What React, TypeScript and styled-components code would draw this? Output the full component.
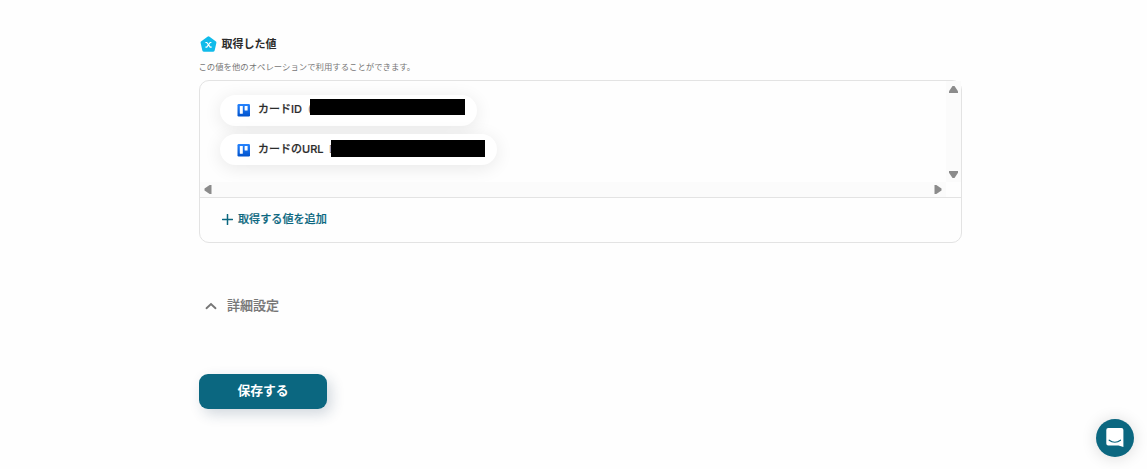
import React from 'react';
import styled, { createGlobalStyle } from 'styled-components';

interface Value {
  label: string;
  hint: string;
  labelWidth: number;
  maskWidth: number;
  maskHeight: number;
  maskOffset: number;
}

const VALUES: Value[] = [
  { label: 'カードID', hint: '(', labelWidth: 52, maskWidth: 155, maskHeight: 16, maskOffset: -7 },
  { label: 'カードのURL', hint: '[', labelWidth: 73, maskWidth: 154, maskHeight: 17, maskOffset: -4 },
];

const TrelloIcon = () => (
  <svg width="13" height="13" viewBox="0 0 13 13">
    <defs>
      <linearGradient id="trello" x1="0" y1="0" x2="0" y2="1">
        <stop offset="0" stopColor="#2684ff" />
        <stop offset="1" stopColor="#0052cc" />
      </linearGradient>
    </defs>
    <rect x="0.5" width="12.5" height="12.5" rx="1.2" fill="url(#trello)" />
    <rect x="2.8" y="2" width="3" height="7.8" rx="0.5" fill="#fff" />
    <rect x="7.6" y="2" width="3" height="4.6" rx="0.5" fill="#fff" />
  </svg>
);

const PentagonIcon = () => (
  <svg width="17" height="17" viewBox="0 0 17 17">
    <path
      d="M8.5 2.2 14.6 6.6 12.9 14H4.1L2.4 6.6Z"
      fill="#10bbea"
      stroke="#10bbea"
      strokeWidth="3.6"
      strokeLinejoin="round"
    />
    <path d="M5.4 6.5h1.4l3.4 4.6h1.5M11.4 6.5h-1.2L6.8 11.1H5.4" fill="none" stroke="#fff" strokeWidth="1.2" />
  </svg>
);

const App = () => {
  return (
    <>
      <GlobalStyle />
      <Container>
        <Heading>
          <PentagonIcon />
          <Title>取得した値</Title>
        </Heading>
        <Description>この値を他のオペレーションで利用することができます。</Description>
        <Card>
          <ScrollArea>
            <ChipList>
              {VALUES.map(({ label, hint, labelWidth, maskWidth, maskHeight, maskOffset }) => (
                <Chip key={label}>
                  <TrelloIcon />
                  <ChipLabel $width={labelWidth}>
                    {label}
                    <Hint>{hint}</Hint>
                  </ChipLabel>
                  <Mask $width={maskWidth} $height={maskHeight} $offset={maskOffset} />
                </Chip>
              ))}
            </ChipList>
            <VerticalBar>
              <svg width="15" height="15" viewBox="0 0 15 15">
                <path d="M6.5 5h2L12 10.2V12H3v-1.8Z" fill="#8b8b8b" />
              </svg>
              <svg width="15" height="15" viewBox="0 0 15 15">
                <path d="M3 4h9v1.8L8.5 11h-2L3 5.8Z" fill="#8b8b8b" />
              </svg>
            </VerticalBar>
            <HorizontalBar>
              <svg width="15" height="15" viewBox="0 0 15 15">
                <path d="M4.5 6.5v2L9.7 12h1.8V3H9.7Z" fill="#8b8b8b" />
              </svg>
              <svg width="15" height="15" viewBox="0 0 15 15">
                <path d="M3.5 3h1.8l5.2 3.5v2L5.3 12H3.5Z" fill="#8b8b8b" />
              </svg>
            </HorizontalBar>
          </ScrollArea>
          <AddButton>
            <svg width="11" height="11" viewBox="0 0 11 11">
              <path d="M5.5 0.5v10M0.5 5.5h10" stroke="#0b6780" strokeWidth="1.5" strokeLinecap="round" />
            </svg>
            <span>取得する値を追加</span>
          </AddButton>
        </Card>
        <DetailToggle>
          <svg width="12" height="8" viewBox="0 0 12 8">
            <path d="M1.5 6.2 6 2l4.5 4.2" fill="none" stroke="#767676" strokeWidth="1.9" strokeLinecap="round" />
          </svg>
          <span>詳細設定</span>
        </DetailToggle>
        <SaveButton>保存する</SaveButton>
      </Container>
      <ChatButton>
        <svg width="18" height="19" viewBox="0 0 18 19">
          <path
            d="M2.2 0h13.3a1.9 1.9 0 0 1 1.9 1.9v17L12.5 17.5H2.2A1.9 1.9 0 0 1 .3 15.6V1.9A1.9 1.9 0 0 1 2.2 0Z"
            fill="#fff"
          />
          <path d="M3.2 12.2c3.3 2.5 8 2.5 11.3 0" fill="none" stroke="#0b6780" strokeWidth="1.2" strokeLinecap="round" />
        </svg>
      </ChatButton>
    </>
  );
};
export default App;

const GlobalStyle = createGlobalStyle`
  * {
    box-sizing: border-box;
  }
  body {
    margin: 0;
    background-color: #fefefe;
    color: #2b2b2b;
    font-family: 'Noto Sans CJK JP', sans-serif;
  }
  svg {
    display: block;
    flex-shrink: 0;
  }
  button {
    padding: 0;
    border: none;
    background: none;
    font-family: inherit;
  }
`;
const Container = styled.main`
  width: 763px;
  height: 469px;
  margin-left: 199px;
  padding-top: 34px;
`;
const Heading = styled.div`
  display: flex;
  align-items: center;
  height: 20px;
  padding-left: 1px;
  gap: 4.5px;
`;
const Title = styled.h2`
  margin: 0;
  padding-bottom: 2px;
  font-size: 11px;
  font-weight: 700;
  line-height: 18px;
`;
const Description = styled.p`
  height: 26px;
  margin: 0 0 0 -0.5px;
  color: #767676;
  font-size: 8.4px;
  line-height: 24px;
`;
const Card = styled.section`
  height: 163px;
  border: 1px solid #e3e3e3;
  border-radius: 10px;
`;
const ScrollArea = styled.div`
  display: grid;
  grid-template-columns: 746px 15px;
  grid-template-rows: 101px 15px;
  height: 117px;
  border-bottom: 1px solid #e3e3e3;
`;
const ChipList = styled.div`
  display: flex;
  flex-direction: column;
  align-items: flex-start;
  gap: 8px;
  padding: 14px 20px 0;
  overflow: hidden;
  border-top-left-radius: 9px;
`;
const Chip = styled.div`
  display: flex;
  align-items: center;
  height: 31px;
  padding: 0 12px 0 17px;
  border-radius: 16px;
  background-color: #fff;
  box-shadow: 0 3px 18px rgba(0, 0, 0, 0.09);

  & + & {
    padding-top: 2px;
  }
`;
const ChipLabel = styled.span<{ $width: number }>`
  display: flex;
  justify-content: space-between;
  width: ${({ $width }) => $width}px;
  margin: -3px 0 0 8px;
  font-family: Inter, 'Noto Sans CJK JP', sans-serif;
  font-size: 11px;
  font-weight: 500;
  line-height: 16px;
  white-space: nowrap;
  -webkit-text-stroke: 0.2px currentColor;
`;
const Hint = styled.span`
  width: 2px;
  overflow: hidden;
  color: #767676;
  font-size: 9px;
  -webkit-text-stroke: 0;
`;
const Mask = styled.span<{ $width: number; $height: number; $offset: number }>`
  width: ${({ $width }) => $width}px;
  height: ${({ $height }) => $height}px;
  margin-top: ${({ $offset }) => $offset}px;
  background-color: #000;
`;
const VerticalBar = styled.div`
  display: flex;
  flex-direction: column;
  justify-content: space-between;
  background-color: #fbfbfb;
`;
const HorizontalBar = styled.div`
  display: flex;
  justify-content: space-between;
  grid-column: 1 / 2;
  background-color: #fbfbfb;
`;
const AddButton = styled.button`
  display: flex;
  align-items: center;
  gap: 5px;
  height: 43px;
  padding-left: 22px;
  color: #0b6780;
  font-size: 11.1px;
  font-weight: 500;
  -webkit-text-stroke: 0.2px currentColor;

  span {
    padding-bottom: 3px;
  }
`;
const DetailToggle = styled.button`
  display: flex;
  align-items: center;
  gap: 10px;
  height: 24px;
  margin-top: 51px;
  padding-left: 6px;
  color: #767676;
  font-size: 13px;
  font-weight: 500;
  -webkit-text-stroke: 0.2px currentColor;

  span {
    padding-bottom: 4px;
  }
`;
const SaveButton = styled.button`
  display: block;
  width: 128px;
  height: 35px;
  margin-top: 56px;
  padding-bottom: 4px;
  border-radius: 9px;
  background-color: #0b6780;
  box-shadow: 4px 5px 14px rgba(30, 60, 90, 0.2);
  color: #fff;
  font-size: 12.8px;
  font-weight: 700;
`;
const ChatButton = styled.button`
  position: fixed;
  right: 13px;
  bottom: 12px;
  display: flex;
  align-items: center;
  justify-content: center;
  width: 38px;
  height: 38px;
  padding-bottom: 1px;
  border-radius: 50%;
  background-color: #0b6780;
  box-shadow: 0 1px 16px rgba(0, 0, 0, 0.14);
`;
